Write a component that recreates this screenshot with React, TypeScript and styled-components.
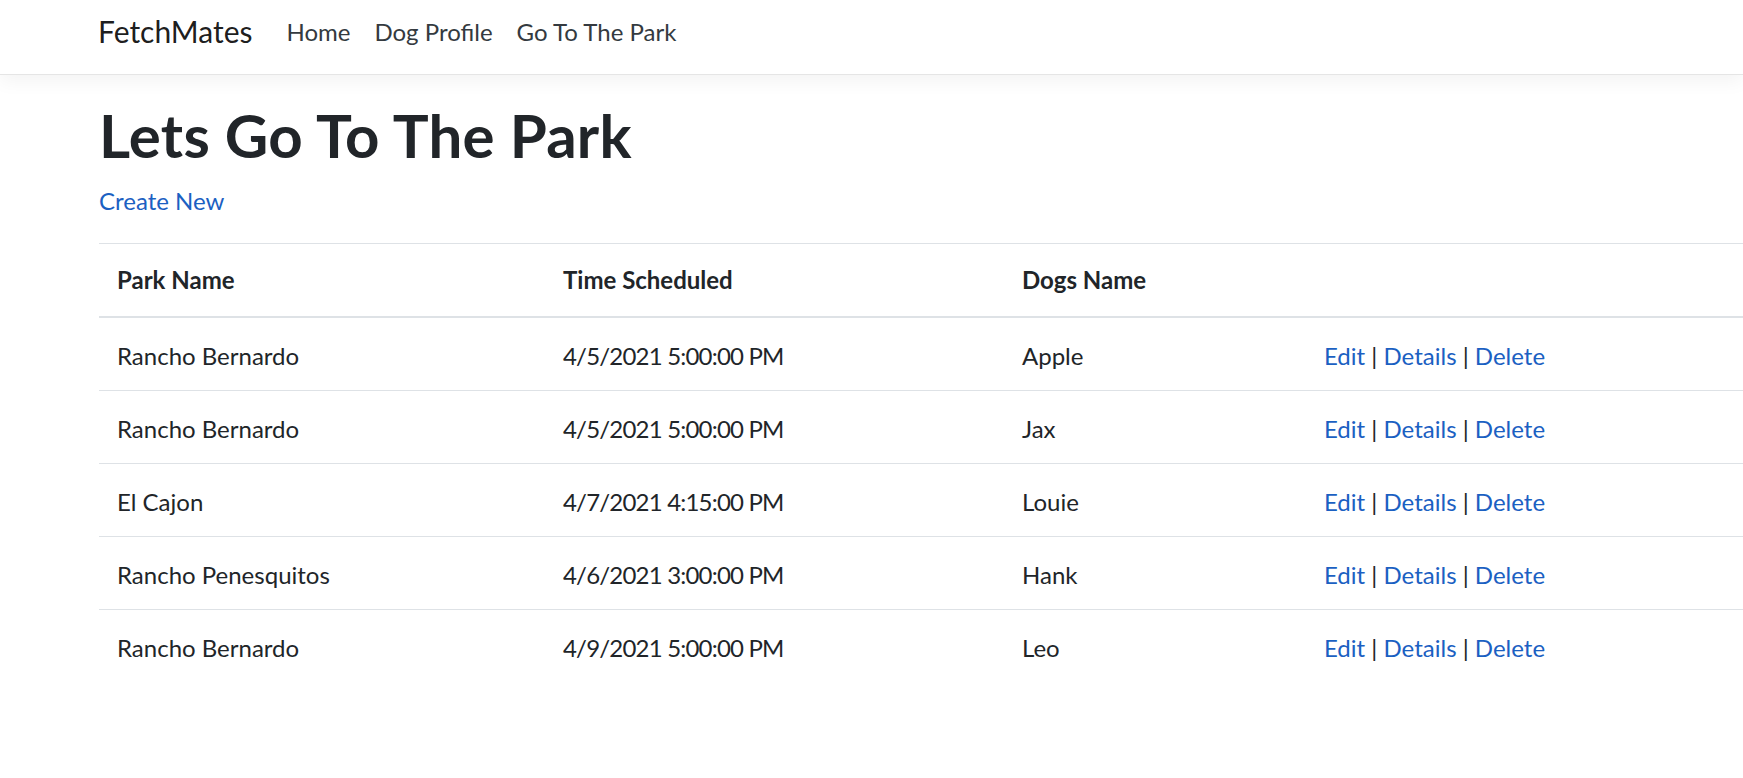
import React from "react";
import styled, { createGlobalStyle } from "styled-components";

const GlobalStyle = createGlobalStyle`
  html, body { margin: 0; padding: 0; }
  body {
    font-family: "Lato", "Open Sans", "Liberation Sans", sans-serif;
    font-size: 24px;
    line-height: 1.5;
    color: #212529;
    background: #fff;
    overflow-x: hidden;
  }
  * { box-sizing: border-box; }
`;

const Navbar = styled.header`
  display: flex;
  align-items: center;
  height: 75px;
  padding: 9px 0 20px 98px;
  background: #fff;
  border-bottom: 1px solid #e5e5e5;
  box-shadow: 0 6px 18px rgba(0, 0, 0, 0.05);
  margin-bottom: 24px;
`;

const Brand = styled.a`
  font-size: 30px;
  line-height: 45px;
  color: rgba(0, 0, 0, 0.9);
  text-decoration: none;
  margin-right: 22px;
`;

const NavList = styled.nav`
  display: flex;
  align-items: center;
`;

const NavLink = styled.a`
  padding: 0 12px;
  font-size: 24px;
  line-height: 36px;
  color: #343a40;
  text-decoration: none;
`;

const Main = styled.main`
  padding-left: 99px;
`;

const Title = styled.h1`
  margin: 0 0 12px;
  font-size: 60px;
  line-height: 72px;
  font-weight: 700;
  letter-spacing: 0.25px;
  color: #212529;
`;

const Para = styled.p`
  margin: 0 0 24px;
`;

const Link = styled.a`
  color: #1b60c2;
  text-decoration: none;
`;

const Table = styled.table`
  width: 100%;
  border-collapse: collapse;
  table-layout: fixed;
`;

const HeadCell = styled.th`
  text-align: left;
  font-weight: 700;
  padding: 18px;
  vertical-align: bottom;
  border-top: 1px solid #dee2e6;
  border-bottom: 2px solid #dee2e6;
`;

const Cell = styled.td<{ $tight?: boolean }>`
  padding: 20px 18px 16px;
  vertical-align: top;
  border-top: 1px solid #dee2e6;
  letter-spacing: ${(p) => (p.$tight ? "-0.8px" : "0")};
`;

const Sep = styled.span`
  color: #212529;
`;

type Visit = { park: string; time: string; dog: string };

const visits: Visit[] = [
  { park: "Rancho Bernardo", time: "4/5/2021 5:00:00 PM", dog: "Apple" },
  { park: "Rancho Bernardo", time: "4/5/2021 5:00:00 PM", dog: "Jax" },
  { park: "El Cajon", time: "4/7/2021 4:15:00 PM", dog: "Louie" },
  { park: "Rancho Penesquitos", time: "4/6/2021 3:00:00 PM", dog: "Hank" },
  { park: "Rancho Bernardo", time: "4/9/2021 5:00:00 PM", dog: "Leo" },
];

export default function App() {
  return (
    <>
      <GlobalStyle />
      <Navbar>
        <Brand href="#">FetchMates</Brand>
        <NavList>
          <NavLink href="#">Home</NavLink>
          <NavLink href="#">Dog Profile</NavLink>
          <NavLink href="#">Go To The Park</NavLink>
        </NavList>
      </Navbar>
      <Main>
        <Title>Lets Go To The Park</Title>
        <Para>
          <Link href="#">Create New</Link>
        </Para>
        <Table>
          <colgroup>
            <col style={{ width: 446 }} />
            <col style={{ width: 459 }} />
            <col style={{ width: 302 }} />
            <col />
          </colgroup>
          <thead>
            <tr>
              <HeadCell>Park Name</HeadCell>
              <HeadCell>Time Scheduled</HeadCell>
              <HeadCell>Dogs Name</HeadCell>
              <HeadCell></HeadCell>
            </tr>
          </thead>
          <tbody>
            {visits.map((v, i) => (
              <tr key={i}>
                <Cell>{v.park}</Cell>
                <Cell $tight>{v.time}</Cell>
                <Cell>{v.dog}</Cell>
                <Cell>
                  <Link href="#">Edit</Link> <Sep>|</Sep>{" "}
                  <Link href="#">Details</Link> <Sep>|</Sep>{" "}
                  <Link href="#">Delete</Link>
                </Cell>
              </tr>
            ))}
          </tbody>
        </Table>
      </Main>
    </>
  );
}
